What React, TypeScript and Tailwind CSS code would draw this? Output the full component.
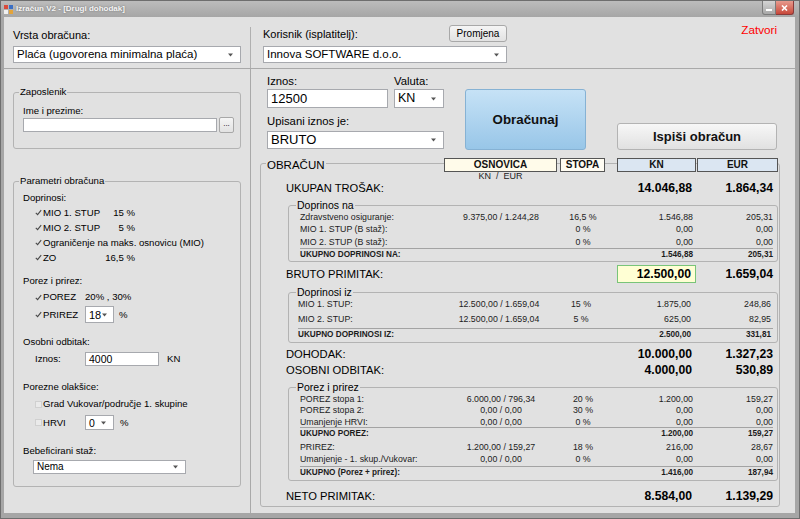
import type { ReactNode } from 'react';

type Line = {
  label: string;
  base?: string;
  rate?: string;
  kn: string;
  eur: string;
  bold?: boolean;
  cls: string;
};

function Arrow() {
  return (
    <svg width="7" height="4" viewBox="0 0 7 4" className="shrink-0">
      <path d="M1 0.5h5L3.5 3.5z" fill="#555" />
    </svg>
  );
}

function Combo({ text, className = '' }: { text: string; className?: string }) {
  return (
    <div className={`flex items-center justify-between border border-[#a7a9ae] bg-white pl-[3px] pr-[6px] ${className}`}>
      <span className="whitespace-nowrap">{text}</span>
      <Arrow />
    </div>
  );
}

function TextBox({ text = '', className = '' }: { text?: string; className?: string }) {
  return (
    <div className={`flex items-center border border-[#a7a9ae] bg-white pl-[3px] ${className}`}>{text}</div>
  );
}

function Check({ on }: { on: boolean }) {
  return (
    <svg width="7" height="7" viewBox="0 0 7 7" className="shrink-0">
      <rect x="0.5" y="0.5" width="6" height="6" fill={on ? 'none' : '#eaeaea'} stroke={on ? 'none' : '#d0d0d0'} />
      {on && <path d="M0.8 3.8 L2.6 5.6 L6.2 1.2" fill="none" stroke="#4a4a4a" strokeWidth="1.1" />}
    </svg>
  );
}

function GroupBox({
  title,
  className = '',
  legendClass = '',
  children,
}: {
  title: string;
  className?: string;
  legendClass?: string;
  children: ReactNode;
}) {
  return (
    <fieldset className={`rounded-[3px] border border-[#b3b3b3] ${className}`}>
      <legend className={`px-[1px] leading-[12px] ${legendClass}`}>{title}</legend>
      {children}
    </fieldset>
  );
}

function Row({ line }: { line: Line }) {
  return (
    <div
      className={`grid grid-cols-[145px_112px_52px_84px_80px] items-center whitespace-nowrap text-[#1c1c1c] ${
        line.bold ? 'text-[8.2px] font-bold' : 'text-[8.8px]'
      } ${line.cls}`}
    >
      <span>{line.label}</span>
      <span className="text-center">{line.base}</span>
      <span className="text-center">{line.rate}</span>
      <span className="text-right">{line.kn}</span>
      <span className="text-right">{line.eur}</span>
    </div>
  );
}

function Sep({ cls = '' }: { cls?: string }) {
  return <div className={`mr-[2px] h-px bg-[#a3a3a3] ${cls}`} />;
}

function BigRow({
  label,
  kn,
  eur,
  highlight = false,
  className = '',
}: {
  label: string;
  kn: string;
  eur: string;
  highlight?: boolean;
  className?: string;
}) {
  return (
    <div className={`flex items-center pl-[25px] pr-[6px] ${className}`}>
      <span className="flex-1 text-[11.2px]">{label}</span>
      <span
        className={`flex w-[79px] items-center justify-end pr-[4px] text-[12.2px] font-bold ${
          highlight ? 'h-[18px] border border-[#79c479] bg-[#ffffd4]' : ''
        }`}
      >
        {kn}
      </span>
      <span className="w-[77px] text-right text-[12.2px] font-bold">{eur}</span>
    </div>
  );
}

const doprinosNa: Line[] = [
  { label: 'Zdravstveno osiguranje:', base: '9.375,00 / 1.244,28', rate: '16,5 %', kn: '1.546,88', eur: '205,31', cls: 'h-[12px]' },
  { label: 'MIO 1. STUP (B staž):', rate: '0 %', kn: '0,00', eur: '0,00', cls: 'h-[13px]' },
  { label: 'MIO 2. STUP (B staž):', rate: '0 %', kn: '0,00', eur: '0,00', cls: 'h-[12px]' },
];

const porez: Line[] = [
  { label: 'POREZ stopa 1:', base: '6.000,00 / 796,34', rate: '20 %', kn: '1.200,00', eur: '159,27', cls: 'h-[11px]' },
  { label: 'POREZ stopa 2:', base: '0,00 / 0,00', rate: '30 %', kn: '0,00', eur: '0,00', cls: 'h-[12px]' },
  { label: 'Umanjenje HRVI:', base: '0,00 / 0,00', rate: '0 %', kn: '0,00', eur: '0,00', cls: 'h-[11px]' },
];

export default function App() {
  return (
    <div className="flex h-[519px] w-[800px] flex-col overflow-hidden border border-[#6e6e6e] bg-[#a6a6a6] font-['Liberation_Sans',Arial,sans-serif] text-black">
      {/* Title bar */}
      <div className="flex h-[16px] shrink-0 items-start bg-gradient-to-b from-[#bcbcbc] to-[#a6a6a6]">
        <svg width="9" height="9" viewBox="0 0 9 9" className="ml-[3px] mt-[4px]">
          <rect x="0" y="0" width="4" height="4" fill="#d94a3a" />
          <rect x="5" y="0" width="4" height="4" fill="#3b6fc4" />
          <rect x="0" y="5" width="4" height="4" fill="#f0f0f0" />
          <rect x="5" y="5" width="4" height="4" fill="#e4a43a" />
        </svg>
        <span className="ml-[3px] mt-[3px] text-[8px] font-bold leading-[10px] text-[#f6f6f6] [text-shadow:0_0_2px_#6a6a6a]">
          Izračun V2 - [Drugi dohodak]
        </span>
        <div className="ml-auto mr-[5px] flex">
          <div className="flex h-[14px] w-[14px] items-end justify-center rounded-bl-[3px] border border-t-0 border-[#7b7b7b] bg-gradient-to-b from-[#d4d4d4] to-[#a9a9a9] pb-[3px]">
            <div className="h-[2px] w-[6px] bg-white" />
          </div>
          <div className="flex h-[14px] w-[18px] items-center justify-center rounded-br-[3px] border border-l-0 border-t-0 border-[#8a3a3a] bg-gradient-to-b from-[#e79a8e] to-[#c7473a]">
            <svg width="7" height="6" viewBox="0 0 7 6">
              <path d="M1 0.5 L6 5.5 M6 0.5 L1 5.5" stroke="white" strokeWidth="1.6" />
            </svg>
          </div>
        </div>
      </div>

      {/* Window body */}
      <div className="ml-[3px] mr-[4px] flex h-[496px] flex-col bg-[#e1e1e1]">
        {/* Top section */}
        <div className="flex h-[52px] shrink-0 border-b border-[#a9a9a9]">
          <div className="w-[246px] pl-[9px] pt-[12px]">
            <div className="text-[11px] leading-[13px]">Vrsta obračuna:</div>
            <Combo className="mt-[4px] h-[17px] w-[228px] text-[11.5px]" text="Plaća (ugovorena minimalna plaća)" />
          </div>
          <div className="mt-[10px] w-px bg-[#b0b0b0]" />
          <div className="pl-[12px] pt-[8px]">
            <div className="flex w-[244px] items-center justify-between">
              <span className="mt-[2px] text-[11px] leading-[13px]">Korisnik (isplatitelj):</span>
              <button className="h-[17px] w-[58px] rounded-[3px] border border-[#a8a8a8] bg-gradient-to-b from-[#f5f5f5] to-[#e2e2e2] text-[10px]">
                Promjena
              </button>
            </div>
            <Combo className="mt-[4px] h-[17px] w-[244px] text-[11.5px]" text="Innova SOFTWARE d.o.o." />
          </div>
          <div className="ml-auto mr-[18px] pt-[6px] text-[11.7px] leading-[13px] text-[#ff0000]">Zatvori</div>
        </div>

        <div className="flex flex-1">
          {/* Left pane */}
          <div className="w-[247px] border-r border-[#a9a9a9] px-[9px] text-[9.6px]">
            <GroupBox title="Zaposlenik" className="mt-[17px] pb-[15px] pl-[5px]">
              <div className="pl-[4px]">
                <div className="mt-[7px] leading-[12px]">Ime i prezime:</div>
                <div className="flex h-[16px] items-center gap-[2px]">
                  <TextBox className="h-[14px] w-[194px]" />
                  <button className="flex h-[16px] w-[15px] items-center justify-center rounded-[2px] border border-[#a8a8a8] bg-gradient-to-b from-[#f5f5f5] to-[#e2e2e2] pb-[2px] text-[8px]">
                    ...
                  </button>
                </div>
              </div>
            </GroupBox>

            <GroupBox title="Parametri obračuna" className="mt-[26px] pb-[12px] pl-[5px]">
              <div className="pl-[4px] leading-[12px]">
                <div className="mt-[5px]">Doprinosi:</div>
                <div className="mt-[1px]">
                  {[
                    ['MIO 1. STUP', '15 %'],
                    ['MIO 2. STUP', '5 %'],
                    ['Ograničenje na maks. osnovicu (MIO)', ''],
                    ['ZO', '16,5 %'],
                  ].map(([l, p]) => (
                    <div key={l} className="ml-[12px] flex h-[15px] items-center">
                      <Check on />
                      {p ? (
                        <span className="ml-[1px] flex w-[92px] justify-between">
                          <span>{l}</span>
                          <span>{p}</span>
                        </span>
                      ) : (
                        <span className="ml-[1px]">{l}</span>
                      )}
                    </div>
                  ))}
                </div>

                <div className="mt-[10px]">Porez i prirez:</div>
                <div className="ml-[12px] mt-[3px] flex h-[14px] items-center">
                  <Check on />
                  <span className="ml-[1px] w-[42px]">POREZ</span>
                  <span>20% , 30%</span>
                </div>
                <div className="ml-[12px] mt-[2px] flex h-[17px] items-center">
                  <Check on />
                  <span className="ml-[1px] w-[42px]">PRIREZ</span>
                  <Combo className="h-[17px] w-[29px] text-[11px]" text="18" />
                  <span className="ml-[5px]">%</span>
                </div>

                <div className="mt-[13px]">Osobni odbitak:</div>
                <div className="ml-[12px] mt-[4px] flex h-[14px] items-center">
                  <span className="w-[50px]">Iznos:</span>
                  <TextBox className="h-[14px] w-[74px] text-[10.5px]" text="4000" />
                  <span className="ml-[8px]">KN</span>
                </div>

                <div className="mt-[15px]">Porezne olakšice:</div>
                <div className="ml-[12px] mt-[4px] flex h-[14px] items-center">
                  <Check on={false} />
                  <span className="ml-[1px]">Grad Vukovar/područje 1. skupine</span>
                </div>
                <div className="ml-[12px] mt-[4px] flex h-[15px] items-center">
                  <Check on={false} />
                  <span className="ml-[1px] w-[42px]">HRVI</span>
                  <Combo className="h-[15px] w-[29px] text-[10.5px]" text="0" />
                  <span className="ml-[6px]">%</span>
                </div>

                <div className="mt-[15px]">Bebeficirani staž:</div>
                <Combo className="ml-[10px] mt-[3px] h-[14px] w-[153px] text-[10px]" text="Nema" />
              </div>
            </GroupBox>
          </div>

          {/* Right pane */}
          <div className="flex-1">
            <div className="flex items-start pl-[16px] pt-[6px]">
              <div className="w-[177px]">
                <div className="flex text-[11.3px] leading-[13px]">
                  <span className="w-[127px]">Iznos:</span>
                  <span>Valuta:</span>
                </div>
                <div className="mt-[1px] flex gap-[6px]">
                  <TextBox className="h-[19px] w-[121px] text-[13px]" text="12500" />
                  <Combo className="h-[19px] w-[50px] text-[12.5px]" text="KN" />
                </div>
                <div className="mt-[7px] text-[11.3px] leading-[13px]">Upisani iznos je:</div>
                <Combo className="mt-[3px] h-[18px] w-[177px] text-[13px]" text="BRUTO" />
              </div>
              <button className="ml-[21px] mt-[14px] h-[61px] w-[121px] rounded-[3px] border border-[#86b2d4] bg-gradient-to-b from-[#c6e2f6] to-[#98c6e8] text-[13.3px] font-bold text-[#111]">
                Obračunaj
              </button>
              <button className="ml-[31px] mt-[48px] h-[27px] w-[160px] rounded-[3px] border border-[#b3b3b3] bg-gradient-to-b from-[#f7f7f7] to-[#e1e1e1] text-[13px] font-bold text-[#111]">
                Ispiši obračun
              </button>
            </div>

            {/* OBRAČUN group */}
            <div className="ml-[9px] mt-[13px] w-[520px] rounded-[3px] border border-[#b3b3b3] pb-[3px]">
              <div className="-mt-[6px] flex h-[14px] items-stretch">
                <span className="ml-[5px] self-center bg-[#e1e1e1] px-[1px] text-[11.5px] leading-[14px]">OBRAČUN</span>
                <div className="ml-auto mr-[1px] flex text-[10px] font-bold leading-[12px] text-[#111]">
                  <div className="flex w-[113px] items-center justify-center border border-[#555] bg-[#fffbea]">OSNOVICA</div>
                  <div className="ml-[3px] flex w-[45px] items-center justify-center border border-[#555] bg-[#fffcf2]">STOPA</div>
                  <div className="ml-[12px] flex w-[79px] items-center justify-center border border-[#555] bg-[#dbe6f2]">KN</div>
                  <div className="ml-[1px] flex w-[81px] items-center justify-center border border-[#555] bg-[#dbe6f2]">EUR</div>
                </div>
              </div>
              <div className="ml-[183px] flex h-[10px] w-[113px] items-center justify-center text-[9px] text-[#222]">
                KN&nbsp;&nbsp;/&nbsp;&nbsp;EUR
              </div>
              <BigRow label="UKUPAN TROŠAK:" kn="14.046,88" eur="1.864,34" className="h-[13px]" />

              <GroupBox title="Doprinos na" className="ml-[27px] mr-[1px] mt-[4px] pl-[7px] pr-[2px]" legendClass="text-[10.5px]">
                <div className="pl-[4px]">
                  {doprinosNa.map((l) => (
                    <Row key={l.label} line={l} />
                  ))}
                  <Sep />
                  <Row line={{ label: 'UKUPNO DOPRINOSI NA:', kn: '1.546,88', eur: '205,31', bold: true, cls: 'h-[12px]' }} />
                </div>
              </GroupBox>

              <BigRow label="BRUTO PRIMITAK:" kn="12.500,00" eur="1.659,04" highlight className="mt-[3px] h-[18px]" />

              <GroupBox title="Doprinosi iz" className="ml-[27px] mr-[1px] mt-[3px] pb-[1px] pl-[7px] pr-[2px]" legendClass="text-[10.5px]">
                <div className="pl-[2px]">
                  <Row line={{ label: 'MIO 1. STUP:', base: '12.500,00 / 1.659,04', rate: '15 %', kn: '1.875,00', eur: '248,86', cls: 'h-[11px]' }} />
                  <Row line={{ label: 'MIO 2. STUP:', base: '12.500,00 / 1.659,04', rate: '5 %', kn: '625,00', eur: '82,95', cls: 'mt-[4px] h-[12px]' }} />
                  <Sep cls="mt-[3px]" />
                  <Row line={{ label: 'UKUPNO DOPRINOSI IZ:', kn: '2.500,00', eur: '331,81', bold: true, cls: 'h-[12px]' }} />
                </div>
              </GroupBox>

              <BigRow label="DOHODAK:" kn="10.000,00" eur="1.327,23" className="mt-[4px] h-[14px]" />
              <BigRow label="OSOBNI ODBITAK:" kn="4.000,00" eur="530,89" className="mt-[2px] h-[14px]" />

              <GroupBox title="Porez i prirez" className="ml-[27px] mr-[1px] mt-[4px] pb-[1px] pl-[7px] pr-[2px]" legendClass="text-[10.5px]">
                <div className="pl-[4px]">
                  {porez.map((l) => (
                    <Row key={l.label} line={l} />
                  ))}
                  <Sep />
                  <Row line={{ label: 'UKUPNO POREZ:', kn: '1.200,00', eur: '159,27', bold: true, cls: 'h-[12px]' }} />
                  <Row line={{ label: 'PRIREZ:', base: '1.200,00 / 159,27', rate: '18 %', kn: '216,00', eur: '28,67', cls: 'mt-[1px] h-[12px]' }} />
                  <Row line={{ label: 'Umanjenje - 1. skup./Vukovar:', base: '0,00 / 0,00', rate: '0 %', kn: '0,00', eur: '0,00', cls: 'h-[12px]' }} />
                  <Sep cls="mt-[1px]" />
                  <Row line={{ label: 'UKUPNO (Porez + prirez):', kn: '1.416,00', eur: '187,94', bold: true, cls: 'h-[12px]' }} />
                </div>
              </GroupBox>

              <BigRow label="NETO PRIMITAK:" kn="8.584,00" eur="1.139,29" className="mt-[8px] h-[14px]" />
            </div>
          </div>
        </div>
      </div>
    </div>
  );
}
